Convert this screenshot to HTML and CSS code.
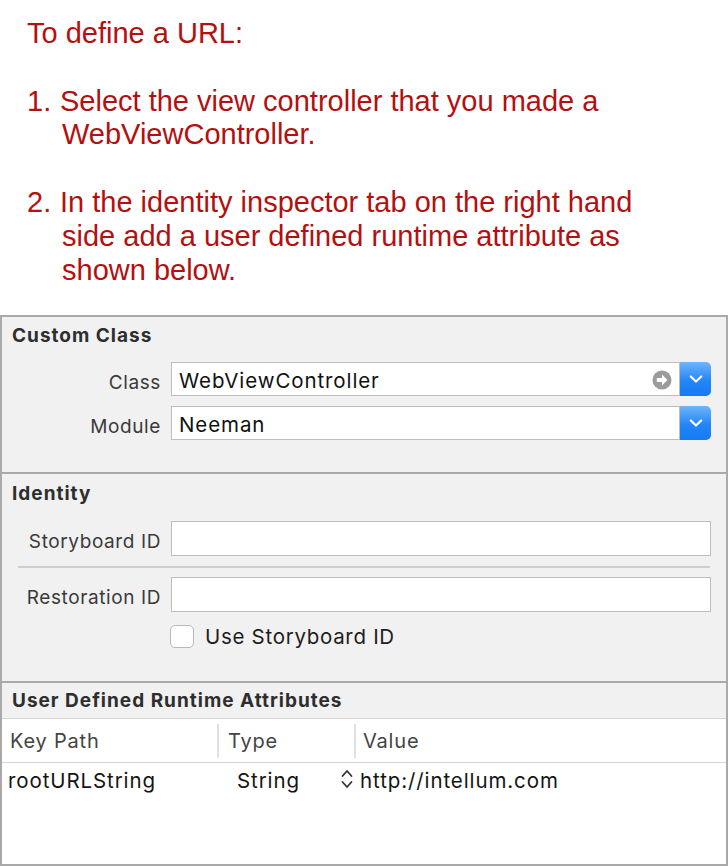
FILE: index.html
```html
<!DOCTYPE html>
<html>
<head>
<meta charset="utf-8">
<link rel="stylesheet" href="styles.css">
</head>
<body>
<div class="intro">
  <p class="intro-title">To define a URL:</p>
  <div class="step">
    <span class="num">1.</span>
    <span class="step-text">Select the view controller that you made a<br><span class="cont">WebViewController.</span></span>
  </div>
  <div class="step">
    <span class="num">2.</span>
    <span class="step-text">In the identity inspector tab on the right hand<br><span class="cont">side add a user defined runtime attribute as</span><br><span class="cont">shown below.</span></span>
  </div>
</div>

<div class="panel">
  <section class="sec sec-class">
    <h2 class="sec-title">Custom Class</h2>
    <div class="form-row">
      <label class="lbl">Class</label>
      <div class="combo">
        <div class="field">WebViewController
          <svg class="goto" width="20" height="20" viewBox="0 0 20 20"><circle cx="10" cy="10" r="9.5" fill="#9b9b9b"/><path d="M4.8 8h5.2V4.6l5.4 5.4-5.4 5.4V12H4.8z" fill="#fff"/></svg>
        </div>
        <div class="drop"><svg width="14" height="10" viewBox="0 0 14 10"><path d="M1.8 2.5l5.2 5 5.2-5" fill="none" stroke="#fff" stroke-width="2.2" stroke-linecap="round" stroke-linejoin="round"/></svg></div>
      </div>
    </div>
    <div class="form-row">
      <label class="lbl">Module</label>
      <div class="combo">
        <div class="field">Neeman</div>
        <div class="drop"><svg width="14" height="10" viewBox="0 0 14 10"><path d="M1.8 2.5l5.2 5 5.2-5" fill="none" stroke="#fff" stroke-width="2.2" stroke-linecap="round" stroke-linejoin="round"/></svg></div>
      </div>
    </div>
  </section>

  <section class="sec sec-identity">
    <h2 class="sec-title">Identity</h2>
    <div class="form-row tall">
      <label class="lbl">Storyboard ID</label>
      <div class="field plain"></div>
    </div>
    <div class="hsep"></div>
    <div class="form-row tall">
      <label class="lbl">Restoration ID</label>
      <div class="field plain"></div>
    </div>
    <div class="form-row check-row">
      <span></span>
      <label class="check"><span class="box"></span>Use Storyboard ID</label>
    </div>
  </section>

  <section class="sec sec-attrs">
    <h2 class="sec-title">User Defined Runtime Attributes</h2>
    <div class="table">
      <div class="thead">
        <div class="th c-key">Key Path</div>
        <div class="th c-type">Type</div>
        <div class="th c-val">Value</div>
      </div>
      <div class="trow">
        <div class="td c-key">rootURLString</div>
        <div class="td c-type">String
          <svg class="updown" width="14" height="22" viewBox="0 0 14 22"><path d="M2.5 8l4.5-5 4.5 5M2.5 14l4.5 5 4.5-5" fill="none" stroke="#333" stroke-width="1.8" stroke-linecap="round" stroke-linejoin="round"/></svg>
        </div>
        <div class="td c-val">http://intellum.com</div>
      </div>
    </div>
  </section>
</div>
</body>
</html>
```

FILE: styles.css
```css
* { box-sizing: border-box; }
html, body { margin: 0; padding: 0; background: #fff; }
body { width: 728px; height: 866px; overflow: hidden; }

.intro {
  font-family: "Liberation Sans", Arial, sans-serif;
  font-size: 29px;
  line-height: 33.8px;
  color: #b3100f;
  padding: 17px 0 0 27px;
  height: 315px;
}
.intro-title { margin: 0 0 33.8px 0; white-space: nowrap; }
.step { display: flex; margin-bottom: 33.8px; white-space: nowrap; }
.num { width: 33px; flex: none; }
.cont { padding-left: 2px; }

.panel {
  font-family: Inter, "Noto Sans", sans-serif;
  background: #f1f1f1;
  border: 2px solid #a9a9a9;
  height: 551px;
  display: flex;
  flex-direction: column;
  color: #1d1d1d;
}
.sec { border-top: 2px solid #a9a9a9; }
.sec:first-child { border-top: none; }
.sec-title {
  margin: 0;
  padding: 1px 0 0 10px;
  font-size: 19px;
  letter-spacing: 1px;
  font-weight: 700;
  line-height: 22px;
  color: #2e2e2e;
  white-space: nowrap;
}

.form-row {
  display: grid;
  grid-template-columns: 159px 1fr;
  column-gap: 10px;
  align-items: center;
  padding-right: 15px;
}
.lbl {
  text-align: right;
  font-size: 19px;
  letter-spacing: 0.6px;
  color: #3a3a3a;
  white-space: nowrap;
  padding-top: 6px;
}

.sec-class { padding: 7px 0 32px; }
.sec-class .sec-title { margin-bottom: 15px; }
.sec-class .form-row + .form-row { margin-top: 10px; }

.combo { display: flex; height: 34px; }
.field {
  flex: 1;
  height: 34px;
  background: #fff;
  border: 1px solid #bdbdbd;
  font-size: 20.5px;
  letter-spacing: 0.9px;
  line-height: 28px;
  padding: 3px 0 0 7px;
  color: #111;
  display: flex;
  align-items: center;
  position: relative;
  white-space: nowrap;
}
.goto { position: absolute; right: 7px; top: 7px; }
.drop {
  width: 31px;
  height: 34px;
  border-radius: 0 5px 5px 0;
  background: linear-gradient(#6fb5fb, #2386f7 55%, #157bf4);
  display: flex;
  align-items: center;
  justify-content: center;
}

.sec-identity { padding: 8px 0 32px; }
.sec-identity .sec-title { margin-bottom: 16px; }
.field.plain { height: 35px; }
.hsep {
  height: 2px;
  background: #cecece;
  margin: 10px 16px 9px 16px;
}
.check-row { margin-top: 12px; }
.check {
  display: flex;
  align-items: center;
  font-size: 20.5px;
  letter-spacing: 0.7px;
  color: #1d1d1d;
  margin-left: -1px;
  white-space: nowrap;
}
.box {
  width: 24px;
  height: 23px;
  border: 1px solid #b8b8b8;
  border-radius: 5px;
  background: #fff;
  margin-right: 11px;
}

.sec-attrs { flex: 1; display: flex; flex-direction: column; padding-top: 6px; }
.sec-attrs .sec-title { margin-bottom: 6px; }
.table {
  flex: 1;
  background: #fff;
  border-top: 1px solid #d6d6d6;
}
.thead {
  display: grid;
  grid-template-columns: 215px 137px 1fr;
  height: 44px;
  border-bottom: 1px solid #d6d6d6;
  align-items: center;
}
.th {
  font-size: 20px;
  letter-spacing: 0.8px;
  color: #444;
  height: 34px;
  line-height: 34px;
  padding-left: 8px;
  white-space: nowrap;
}
.th + .th { border-left: 2px solid #e0e0e0; }
.th.c-type { padding-left: 9px; }
.th.c-val { padding-left: 7px; }
.trow {
  display: grid;
  grid-template-columns: 215px 137px 1fr;
  height: 34px;
  align-items: center;
}
.td { font-size: 20.5px; letter-spacing: 0.9px; color: #141414; white-space: nowrap; }
.td.c-key { padding-left: 6px; }
.td.c-type { padding-left: 20px; position: relative; display: flex; align-items: center; }
.updown { position: absolute; right: 0; top: 0; }
.td.c-val { padding-left: 6px; }
```
